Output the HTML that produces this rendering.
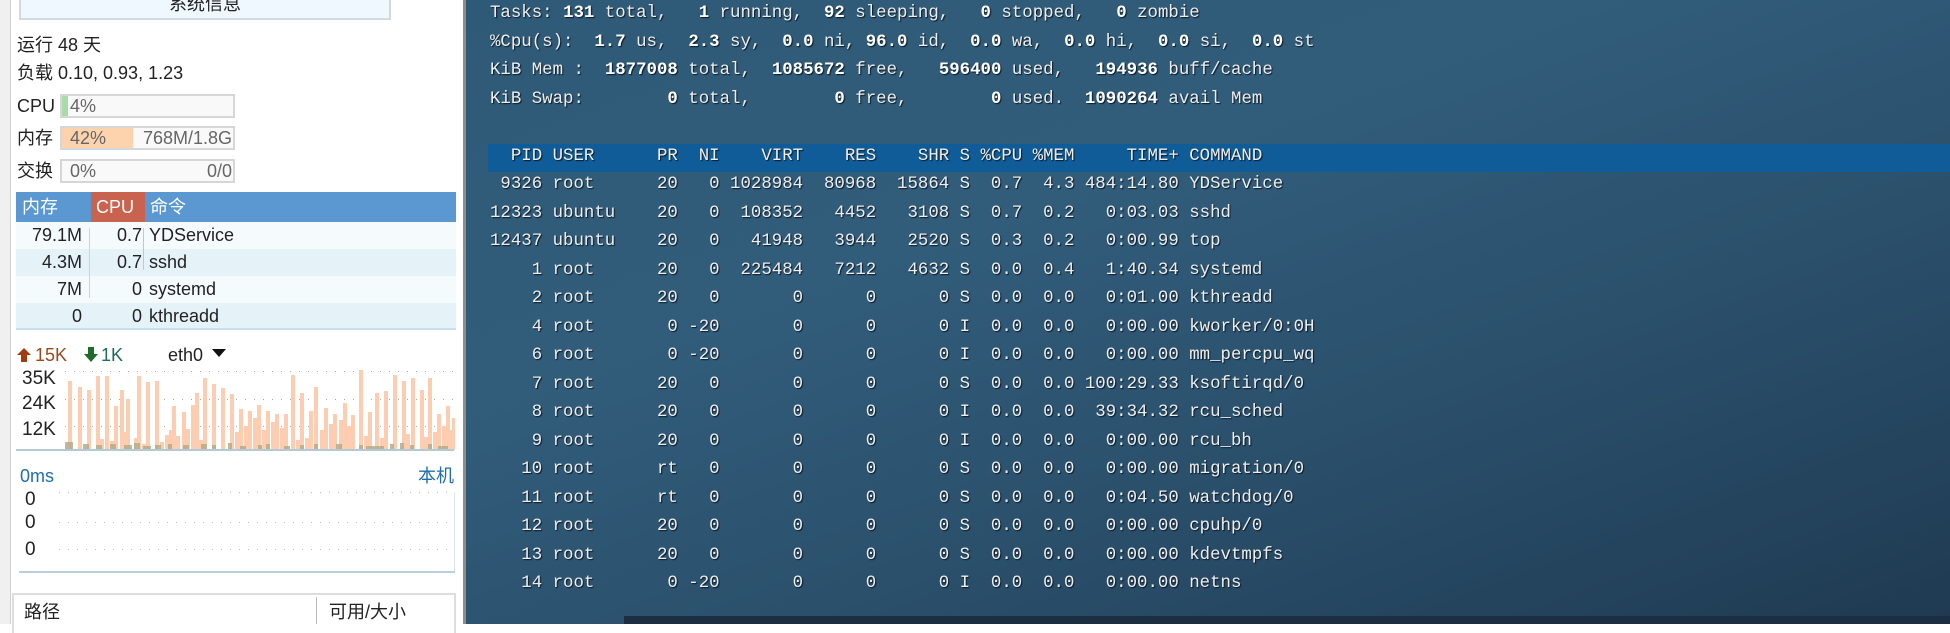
<!DOCTYPE html>
<html><head><meta charset="utf-8"><style>
*{margin:0;padding:0;box-sizing:border-box}
body{width:1950px;height:624px;overflow:hidden;position:relative;background:#fff;font-family:"Liberation Sans","Noto Sans CJK SC",sans-serif;font-size:18px;line-height:22px;color:#222}
.a{position:absolute;white-space:nowrap}
#lp{position:absolute;left:0;top:0;width:463px;height:624px;background:#fff;border-left:10px solid #f0f0f0}
#lp:before{content:"";position:absolute;left:0;top:0;width:1px;height:624px;background:#d0d0d0}
#term{position:absolute;left:463px;top:0;width:1487px;height:624px;background:linear-gradient(160deg,#2f5a77 0%,#315d7b 35%,#2a4f6b 65%,#1f3a52 100%);border-left:3px solid #8d8d8d}
pre{position:absolute;left:24px;top:0;font-family:"Liberation Mono",monospace;font-size:17.4px;line-height:28.5px;color:#eeeeee;text-shadow:1px 1px 1px #0a1a28}
pre b{color:#fff}
.bar{position:absolute;border:2px solid #d6d6d6;background:#f9f9f9;height:24px;width:175px;left:60px;line-height:20px}
.row{position:absolute;left:16px;width:440px;height:27px;line-height:27px}
</style></head><body>
<div id="lp">
<div class="a" style="left:9px;top:-10px;width:372px;height:30px;background:#f0f8ff;border:2px solid #d4d9de;text-align:center;line-height:24px;font-size:18px">系统信息</div>
</div>
<div class="a" style="left:17px;top:34px">运行 48 天</div>
<div class="a" style="left:17px;top:62px">负载 0.10, 0.93, 1.23</div>
<div class="a" style="left:17px;top:95px">CPU</div>
<div class="bar" style="top:94px"><div style="position:absolute;left:0;top:0;width:6px;height:20px;background:#a8dba8"></div><span class="a" style="left:8px;top:0;color:#666">4%</span></div>
<div class="a" style="left:17px;top:127px">内存</div>
<div class="bar" style="top:126px"><div style="position:absolute;left:0;top:0;width:71px;height:20px;background:#fdd3ae"></div><span class="a" style="left:8px;top:0;color:#666">42%</span><span class="a" style="right:1px;top:0;color:#666">768M/1.8G</span></div>
<div class="a" style="left:17px;top:160px">交换</div>
<div class="bar" style="top:159px"><span class="a" style="left:8px;top:0;color:#666">0%</span><span class="a" style="right:1px;top:0;color:#666">0/0</span></div>

<div class="a" style="left:16px;top:192px;width:440px;height:30px;background:#5b97d1;color:#fff;line-height:30px">
<div class="a" style="left:75px;top:0;width:54px;height:30px;background:#c9634f"></div>
<span class="a" style="left:6px">内存</span>
<span class="a" style="left:80px">CPU</span><span class="a" style="left:134px">命令</span></div>
<div class="a" style="left:16px;top:222px;width:440px;height:108px;border:2px solid #c6def0;border-top:0"></div>
<div class="row" style="top:222px;background:#f5fbfd"><span class="a" style="right:374px">79.1M</span><span class="a" style="right:314px">0.7</span><span class="a" style="left:133px">YDService</span></div>
<div class="row" style="top:249px;background:#e5f3f9"><span class="a" style="right:374px">4.3M</span><span class="a" style="right:314px">0.7</span><span class="a" style="left:133px">sshd</span></div>
<div class="row" style="top:276px;background:#f5fbfd"><span class="a" style="right:374px">7M</span><span class="a" style="right:314px">0</span><span class="a" style="left:133px">systemd</span></div>
<div class="row" style="top:303px;background:#e5f3f9;height:25px"><span class="a" style="right:374px">0</span><span class="a" style="right:314px">0</span><span class="a" style="left:133px">kthreadd</span></div>
<div class="a" style="left:89px;top:228px;width:1px;height:70px;background:#f5c8a0"></div>
<div class="a" style="left:143px;top:228px;width:1px;height:42px;background:#a8dba8"></div>

<svg class="a" style="left:16px;top:346px" width="20" height="18"><path d="M8 2 L1 9 H5 V16 H11 V9 H15 Z" fill="#a43a10"/></svg>
<div class="a" style="left:35px;top:344px;color:#9a4a1e">15K</div>
<svg class="a" style="left:83px;top:346px" width="20" height="18"><path d="M5 1 H11 V8 H15 L8 16 L1 8 H5 Z" fill="#1e6b2c"/></svg>
<div class="a" style="left:101px;top:344px;color:#1e6a5a">1K</div>
<div class="a" style="left:168px;top:344px">eth0</div>
<svg class="a" style="left:212px;top:349px" width="16" height="10"><path d="M0 0 H14 L7 8 Z" fill="#111"/></svg>
<div class="a" style="left:22px;top:368px;font-size:19px">35K</div>
<div class="a" style="left:22px;top:393px;font-size:19px">24K</div>
<div class="a" style="left:22px;top:419px;font-size:19px">12K</div>
<svg class="a" style="left:0;top:360px" width="463" height="95">
<g stroke="#aaa" stroke-dasharray="1 8" stroke-width="1"><line x1="65" y1="11.5" x2="455" y2="11.5"/><line x1="65" y1="39.5" x2="455" y2="39.5"/><line x1="65" y1="66.5" x2="455" y2="66.5"/></g>
<g fill="#fdcdb2" transform="translate(0,-360)">
<rect x="68" y="381" width="4" height="69"/><rect x="78" y="387" width="4" height="63"/><rect x="87" y="390" width="4" height="60"/><rect x="96" y="376" width="4" height="74"/><rect x="105" y="376" width="4" height="74"/><rect x="114" y="406" width="4" height="44"/><rect x="120" y="390" width="4" height="60"/><rect x="126" y="399" width="4" height="51"/><rect x="137" y="376" width="4" height="74"/><rect x="146" y="382" width="4" height="68"/><rect x="155" y="381" width="4" height="69"/><rect x="165" y="435" width="4" height="15"/><rect x="172" y="406" width="4" height="44"/><rect x="182" y="412" width="4" height="38"/><rect x="191" y="405" width="4" height="45"/><rect x="195" y="393" width="4" height="57"/><rect x="203" y="378" width="4" height="72"/><rect x="212" y="384" width="4" height="66"/><rect x="221" y="388" width="4" height="62"/><rect x="230" y="394" width="4" height="56"/><rect x="239" y="409" width="4" height="41"/><rect x="248" y="411" width="4" height="39"/><rect x="257" y="405" width="4" height="45"/><rect x="266" y="411" width="4" height="39"/><rect x="275" y="414" width="4" height="36"/><rect x="284" y="414" width="4" height="36"/><rect x="291" y="375" width="4" height="75"/><rect x="300" y="393" width="4" height="57"/><rect x="309" y="411" width="4" height="39"/><rect x="314" y="387" width="4" height="63"/><rect x="324" y="408" width="4" height="42"/><rect x="333" y="414" width="4" height="36"/><rect x="343" y="403" width="4" height="47"/><rect x="351" y="415" width="4" height="35"/><rect x="359" y="370" width="4" height="80"/><rect x="368" y="412" width="4" height="38"/><rect x="375" y="393" width="4" height="57"/><rect x="384" y="391" width="4" height="59"/><rect x="393" y="375" width="4" height="75"/><rect x="402" y="381" width="4" height="69"/><rect x="411" y="378" width="4" height="72"/><rect x="420" y="390" width="4" height="60"/><rect x="428" y="378" width="4" height="72"/><rect x="437" y="414" width="4" height="36"/><rect x="446" y="406" width="4" height="44"/><rect x="452" y="418" width="3" height="32"/>
<rect x="123" y="432" width="4" height="18"/><rect x="134" y="438" width="4" height="12"/><rect x="169" y="430" width="4" height="20"/><rect x="176" y="436" width="4" height="14"/><rect x="186" y="429" width="4" height="21"/><rect x="199" y="440" width="4" height="10"/><rect x="235" y="432" width="4" height="18"/><rect x="244" y="426" width="4" height="24"/><rect x="253" y="418" width="4" height="32"/><rect x="262" y="430" width="4" height="20"/><rect x="271" y="422" width="4" height="28"/><rect x="280" y="428" width="4" height="22"/><rect x="296" y="440" width="4" height="10"/><rect x="305" y="438" width="4" height="12"/><rect x="320" y="430" width="4" height="20"/><rect x="329" y="424" width="4" height="26"/><rect x="339" y="420" width="4" height="30"/><rect x="347" y="426" width="4" height="24"/><rect x="364" y="436" width="4" height="14"/><rect x="380" y="438" width="4" height="12"/><rect x="406" y="434" width="4" height="16"/><rect x="424" y="437" width="4" height="13"/><rect x="433" y="432" width="4" height="18"/><rect x="442" y="426" width="4" height="24"/><rect x="449" y="430" width="3" height="20"/><rect x="100" y="439" width="4" height="11"/><rect x="110" y="441" width="4" height="9"/><rect x="142" y="444" width="4" height="6"/><rect x="160" y="442" width="4" height="8"/>
</g>
<g fill="#b4ad8a" opacity="0.85">
<rect x="65" y="82" width="8" height="8"/><rect x="83" y="84" width="6" height="6"/><rect x="96" y="85" width="6" height="5"/><rect x="110" y="84" width="6" height="6"/><rect x="124" y="85" width="8" height="5"/><rect x="134" y="83" width="6" height="7"/><rect x="143" y="86" width="8" height="4"/><rect x="155" y="85" width="6" height="5"/><rect x="168" y="84" width="4" height="6"/><rect x="183" y="85" width="6" height="5"/><rect x="201" y="84" width="6" height="6"/><rect x="212" y="85" width="4" height="5"/><rect x="228" y="83" width="4" height="7"/><rect x="240" y="86" width="6" height="4"/><rect x="258" y="85" width="4" height="5"/><rect x="266" y="84" width="4" height="6"/><rect x="284" y="86" width="6" height="4"/><rect x="300" y="85" width="4" height="5"/><rect x="314" y="84" width="4" height="6"/><rect x="336" y="84" width="6" height="6"/><rect x="359" y="85" width="4" height="5"/><rect x="366" y="86" width="18" height="4"/><rect x="390" y="84" width="4" height="6"/><rect x="400" y="83" width="4" height="7"/><rect x="410" y="85" width="4" height="5"/><rect x="428" y="84" width="4" height="6"/><rect x="438" y="86" width="10" height="4"/>
</g>
<rect x="16" y="89" width="438" height="2" fill="#b3cad6"/>
</svg>

<div class="a" style="left:20px;top:465px;color:#1f6fad">0ms</div>
<div class="a" style="left:418px;top:465px;color:#1f6fad">本机</div>
<div class="a" style="left:25px;top:489px;font-size:19px">0</div>
<div class="a" style="left:25px;top:512px;font-size:19px">0</div>
<div class="a" style="left:25px;top:539px;font-size:19px">0</div>
<svg class="a" style="left:0;top:488px" width="463" height="90">
<g stroke="#bbb" stroke-dasharray="1 8"><line x1="59" y1="4.5" x2="455" y2="4.5"/><line x1="59" y1="34.5" x2="455" y2="34.5"/><line x1="59" y1="61.5" x2="455" y2="61.5"/></g>
<rect x="454" y="4" width="1" height="80" fill="#dbe6ec"/>
<rect x="19" y="83" width="436" height="2" fill="#b9cfd9"/>
</svg>
<div class="a" style="left:12px;top:593px;width:444px;height:40px;border:2px solid #ddd;border-bottom:0"></div>
<div class="a" style="left:316px;top:597px;width:1px;height:27px;background:#bbb"></div>
<div class="a" style="left:24px;top:601px;font-size:18px">路径</div>
<div class="a" style="left:329px;top:601px;font-size:18px">可用/大小</div>

<div id="term">
<div class="a" style="left:22px;top:144px;width:1465px;height:28px;background:#0f5c98"></div>
<div class="a" style="left:158px;top:616px;width:1329px;height:8px;background:#1c2f42"></div>
<pre>Tasks: <b>131</b> total,   <b>1</b> running,  <b>92</b> sleeping,   <b>0</b> stopped,   <b>0</b> zombie
%Cpu(s):  <b>1.7</b> us,  <b>2.3</b> sy,  <b>0.0</b> ni, <b>96.0</b> id,  <b>0.0</b> wa,  <b>0.0</b> hi,  <b>0.0</b> si,  <b>0.0</b> st
KiB Mem :  <b>1877008</b> total,  <b>1085672</b> free,   <b>596400</b> used,   <b>194936</b> buff/cache
KiB Swap:        <b>0</b> total,        <b>0</b> free,        <b>0</b> used.  <b>1090264</b> avail Mem

  PID USER      PR  NI    VIRT    RES    SHR S %CPU %MEM     TIME+ COMMAND
 9326 root      20   0 1028984  80968  15864 S  0.7  4.3 484:14.80 YDService
12323 ubuntu    20   0  108352   4452   3108 S  0.7  0.2   0:03.03 sshd
12437 ubuntu    20   0   41948   3944   2520 S  0.3  0.2   0:00.99 top
    1 root      20   0  225484   7212   4632 S  0.0  0.4   1:40.34 systemd
    2 root      20   0       0      0      0 S  0.0  0.0   0:01.00 kthreadd
    4 root       0 -20       0      0      0 I  0.0  0.0   0:00.00 kworker/0:0H
    6 root       0 -20       0      0      0 I  0.0  0.0   0:00.00 mm_percpu_wq
    7 root      20   0       0      0      0 S  0.0  0.0 100:29.33 ksoftirqd/0
    8 root      20   0       0      0      0 I  0.0  0.0  39:34.32 rcu_sched
    9 root      20   0       0      0      0 I  0.0  0.0   0:00.00 rcu_bh
   10 root      rt   0       0      0      0 S  0.0  0.0   0:00.00 migration/0
   11 root      rt   0       0      0      0 S  0.0  0.0   0:04.50 watchdog/0
   12 root      20   0       0      0      0 S  0.0  0.0   0:00.00 cpuhp/0
   13 root      20   0       0      0      0 S  0.0  0.0   0:00.00 kdevtmpfs
   14 root       0 -20       0      0      0 I  0.0  0.0   0:00.00 netns</pre>
</div>
</body></html>
